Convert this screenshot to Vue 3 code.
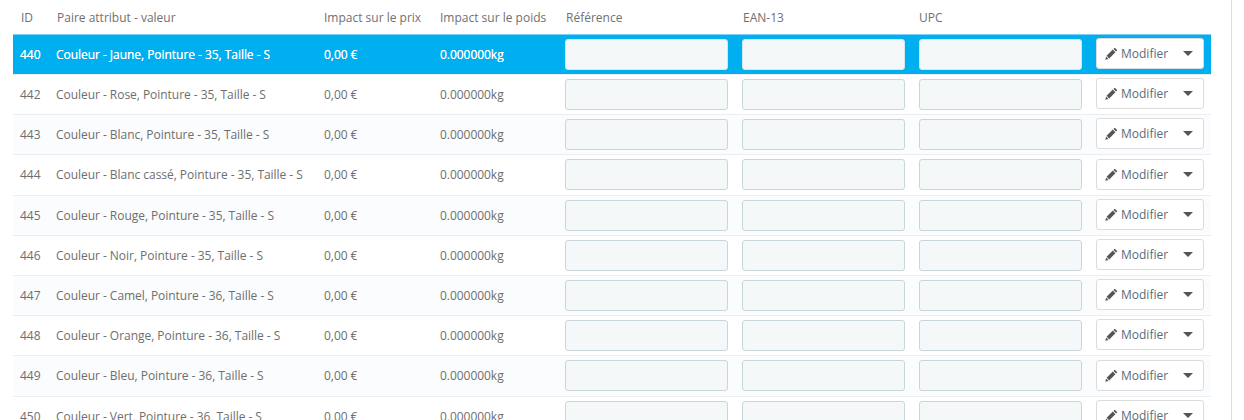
<script setup>
const columns = ['ID', 'Paire attribut - valeur', 'Impact sur le prix', 'Impact sur le poids', 'Référence', 'EAN-13', 'UPC', '']

const rows = [
  { id: 440, name: 'Couleur - Jaune, Pointure - 35, Taille - S', active: true },
  { id: 442, name: 'Couleur - Rose, Pointure - 35, Taille - S' },
  { id: 443, name: 'Couleur - Blanc, Pointure - 35, Taille - S' },
  { id: 444, name: 'Couleur - Blanc cassé, Pointure - 35, Taille - S' },
  { id: 445, name: 'Couleur - Rouge, Pointure - 35, Taille - S' },
  { id: 446, name: 'Couleur - Noir, Pointure - 35, Taille - S' },
  { id: 447, name: 'Couleur - Camel, Pointure - 36, Taille - S' },
  { id: 448, name: 'Couleur - Orange, Pointure - 36, Taille - S' },
  { id: 449, name: 'Couleur - Bleu, Pointure - 36, Taille - S' },
  { id: 450, name: 'Couleur - Vert, Pointure - 36, Taille - S' }
]
</script>

<template>
  <div class="page">
    <div class="panel">
      <div class="row head">
        <div v-for="col in columns" :key="col" class="cell">{{ col }}</div>
      </div>
      <div v-for="(row, i) in rows" :key="row.id" class="row" :class="{ active: row.active, odd: i % 2 === 0 }">
        <div class="cell">{{ row.id }}</div>
        <div class="cell">{{ row.name }}</div>
        <div class="cell">0,00 €</div>
        <div class="cell">0.000000kg</div>
        <div class="cell"><input class="field" type="text"></div>
        <div class="cell"><input class="field" type="text"></div>
        <div class="cell"><input class="field" type="text"></div>
        <div class="cell">
          <div class="btn">
            <svg class="pencil" viewBox="0 0 12 12" width="13" height="13">
              <path d="M9 .6l2.400 2.400-1.200 1.200-2.400-2.400zM7.200 2.400l2.400 2.400-5.700 5.700-2.400-2.400zM1 8.700l2.300 2.300-3 .8z" fill="#555"/>
            </svg>
            <span class="label">Modifier</span>
            <span class="caret"></span>
          </div>
        </div>
      </div>
    </div>
  </div>
</template>

<style>
html, body {
  margin: 0;
  height: 420px;
  overflow: hidden;
  background: #fff;
}
</style>

<style scoped>
.page {
  height: 420px;
  overflow: hidden;
  box-sizing: border-box;
  padding-left: 13px;
  font-family: "Open Sans", sans-serif;
  font-size: 12px;
  color: #6e6e6e;
  position: relative;
}

.page::after {
  content: "";
  position: absolute;
  top: 0;
  bottom: 0;
  left: 1231px;
  width: 1px;
  background: #ddd;
}

.panel {
  width: 1198px;
}

.row {
  display: grid;
  grid-template-columns: 36px 268px 116px 125px 177px 177px 177px 122px;
  height: 40.2px;
  box-sizing: border-box;
  border-bottom: 1px solid #eaedf1;
  align-items: center;
  letter-spacing: -0.04px;
}

.row.odd {
  background: #fbfcfd;
}

.row.head {
  height: 35px;
  background: #fff;
  border-bottom: 1px solid #7fd0f5;
  color: #707070;
  letter-spacing: 0;
}

.head .cell {
  padding-left: 8px;
}

.head .cell:nth-child(3),
.head .cell:nth-child(4),
.head .cell:nth-child(7) {
  padding-left: 7px;
}

.row.active {
  background: #00aff0;
  color: #fff;
  height: 40px;
  text-shadow: 0 0 0.6px #fff;
}

.cell {
  padding: 0 7px;
  white-space: nowrap;
  min-width: 0;
}

.field {
  display: block;
  width: 100%;
  height: 31px;
  box-sizing: border-box;
  margin: 0;
  padding: 0 8px;
  background: #f5f8f9;
  border: 1px solid #c7d6db;
  border-radius: 3px;
}

.active .field {
  border-color: #d5e6ee;
}

.btn {
  display: flex;
  align-items: center;
  box-sizing: border-box;
  width: 108px;
  height: 31px;
  margin-top: -1.6px;
  padding-left: 8px;
  background: #fff;
  border: 1px solid #dcdcdc;
  border-radius: 3px;
  color: #576c7a;
  letter-spacing: 0;
  text-shadow: none;
}

.pencil {
  flex: none;
  margin-right: 3px;
}

.label {
  flex: 1;
}

.caret {
  width: 0;
  height: 0;
  margin-right: 10px;
  border-left: 5px solid transparent;
  border-right: 5px solid transparent;
  border-top: 5px solid #555;
}
</style>
